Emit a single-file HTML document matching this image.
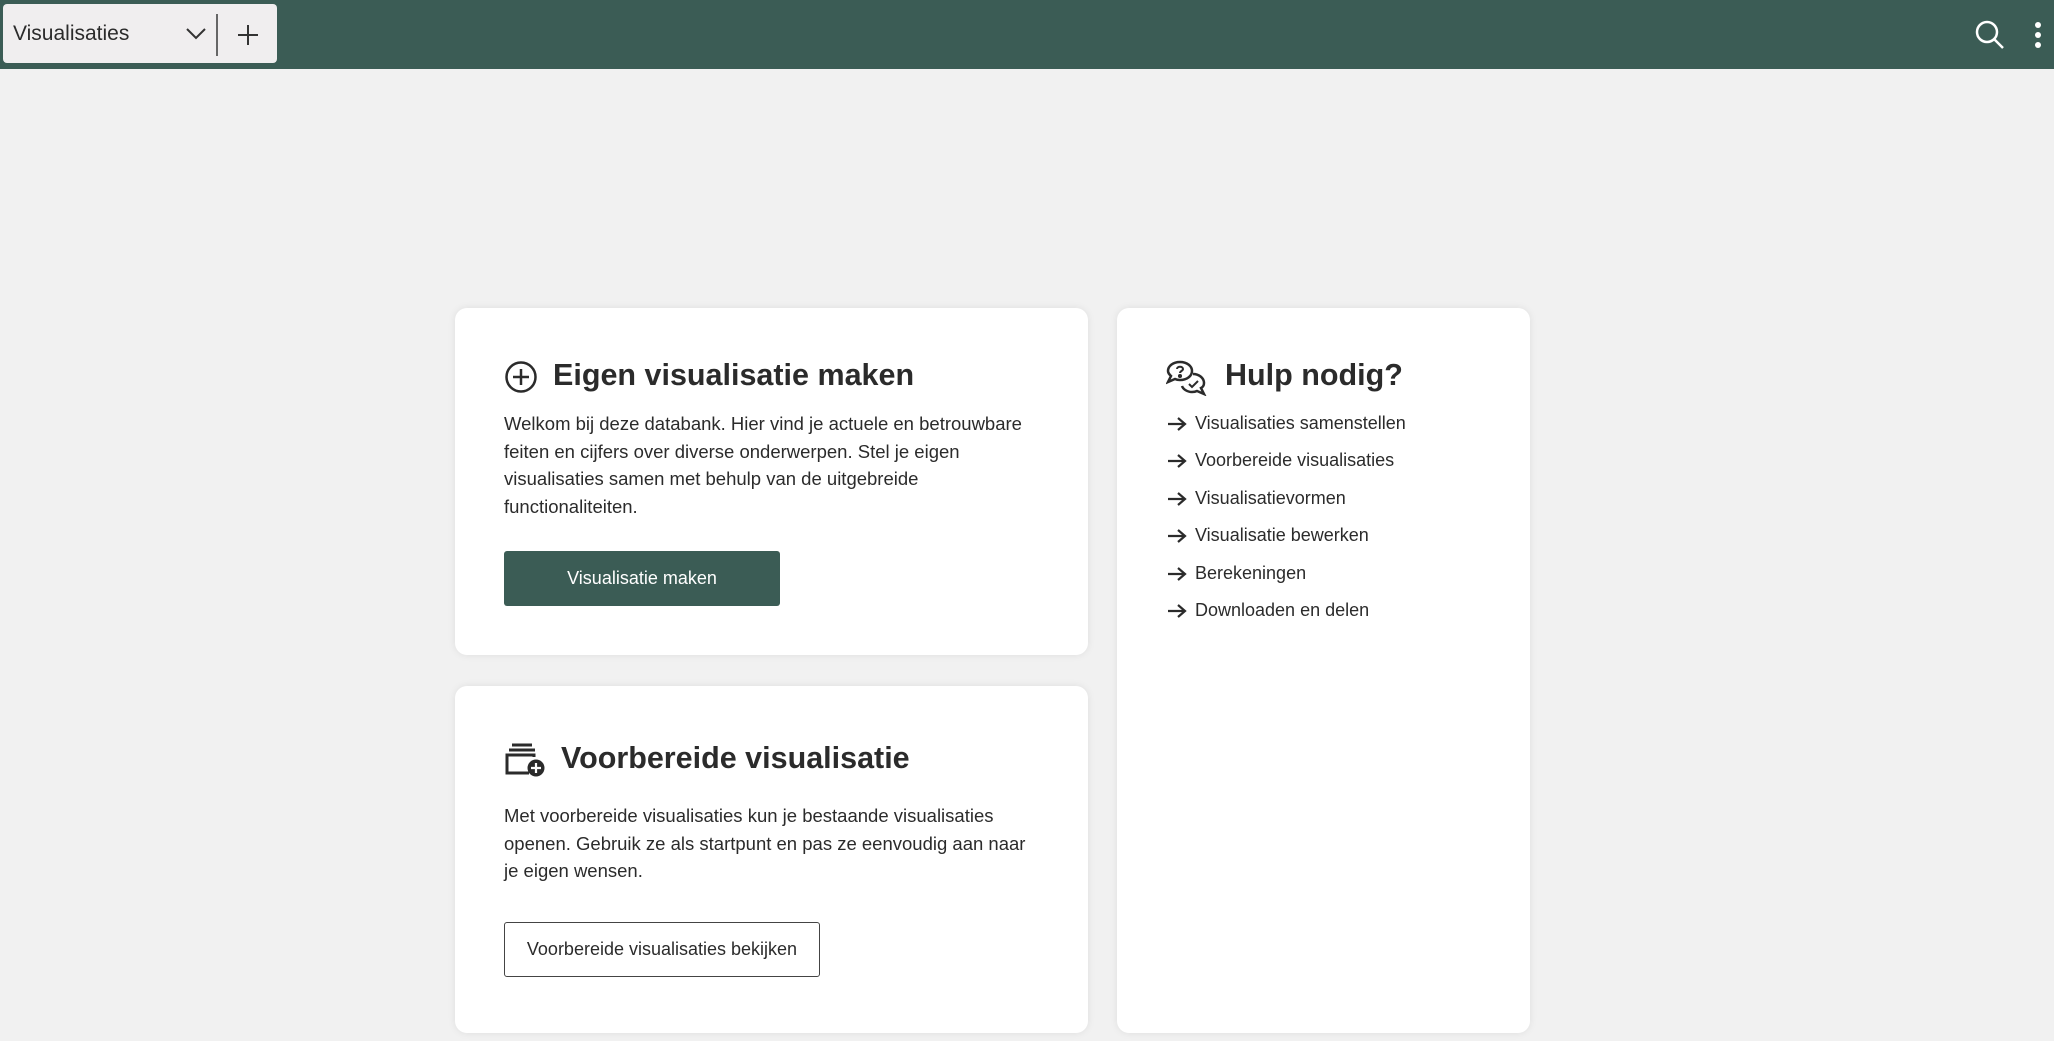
<!DOCTYPE html>
<html><head><meta charset="utf-8"><style>
*{box-sizing:border-box;margin:0;padding:0}
body{width:2054px;height:1041px;background:#f1f1f1;font-family:"Liberation Sans",sans-serif;color:#2b2b2b;position:relative;overflow:hidden}
.top{position:absolute;left:0;top:0;width:2054px;height:69px;background:#3b5c55}
.tab{position:absolute;left:3px;top:4px;width:274px;height:59px;background:#f0eeef;border-radius:4px}
.tab span{position:absolute;left:10px;top:18px;font-size:21px;color:#2b2b2b}
.card{position:absolute;background:#fff;border-radius:12px;box-shadow:0 0 8px rgba(0,0,0,.08)}
h2{position:absolute;font-size:30.5px;font-weight:bold;color:#2b2b2b;white-space:nowrap}
p{position:absolute;font-size:18.5px;line-height:27.5px;color:#2b2b2b;white-space:nowrap}
.btn{position:absolute;font-size:18px;display:flex;align-items:center;justify-content:center;border-radius:3px}
.li{position:absolute;left:78px;font-size:18px;white-space:nowrap}
.li svg{position:absolute;left:-28px;top:3px}
</style></head><body>
<div class="top">
 <div class="tab"><span>Visualisaties</span>
  <svg style="position:absolute;left:182px;top:22px" width="22" height="14"><path d="M2 3l9 9 9-9" fill="none" stroke="#333" stroke-width="2"/></svg>
  <div style="position:absolute;left:213px;top:10px;width:2px;height:42px;background:#666"></div>
  <svg style="position:absolute;left:234px;top:20px" width="22" height="22"><path d="M11 1v20M1 11h20" stroke="#333" stroke-width="2"/></svg>
 </div>
 <svg style="position:absolute;left:1974px;top:19px" width="32" height="32"><circle cx="13" cy="13" r="10" fill="none" stroke="#fff" stroke-width="2.5"/><path d="M20 20l9 9" stroke="#fff" stroke-width="2.5"/></svg>
 <svg style="position:absolute;left:2033px;top:21px" width="10" height="30"><circle cx="5" cy="4" r="3" fill="#fff"/><circle cx="5" cy="14" r="3" fill="#fff"/><circle cx="5" cy="24" r="3" fill="#fff"/></svg>
</div>

<div class="card" style="left:455px;top:308px;width:633px;height:347px">
 <svg style="position:absolute;left:49px;top:52px" width="34" height="34"><circle cx="17" cy="17" r="14.5" fill="none" stroke="#2b2b2b" stroke-width="2.5"/><path d="M17 9v16M9 17h16" stroke="#2b2b2b" stroke-width="2.5"/></svg>
 <h2 style="left:98px;top:50px">Eigen visualisatie maken</h2>
 <p style="left:49px;top:102px">Welkom bij deze databank. Hier vind je actuele en betrouwbare<br>feiten en cijfers over diverse onderwerpen. Stel je eigen<br>visualisaties samen met behulp van de uitgebreide<br>functionaliteiten.</p>
 <div class="btn" style="left:49px;top:243px;width:276px;height:55px;background:#3b5c55;color:#fff">Visualisatie maken</div>
</div>

<div class="card" style="left:455px;top:686px;width:633px;height:347px">
 <svg style="position:absolute;left:49px;top:57px" width="42" height="34"><path d="M8 2h20M5 7h26" stroke="#2b2b2b" stroke-width="3"/><path d="M30 14V12H3v18h22" fill="none" stroke="#2b2b2b" stroke-width="3"/><circle cx="32" cy="25" r="8.5" fill="#2b2b2b"/><path d="M32 20v10M27 25h10" stroke="#fff" stroke-width="2.2"/></svg>
 <h2 style="left:106px;top:55px">Voorbereide visualisatie</h2>
 <p style="left:49px;top:116px">Met voorbereide visualisaties kun je bestaande visualisaties<br>openen. Gebruik ze als startpunt en pas ze eenvoudig aan naar<br>je eigen wensen.</p>
 <div class="btn" style="left:49px;top:236px;width:316px;height:55px;border:1.5px solid #444;color:#2b2b2b">Voorbereide visualisaties bekijken</div>
</div>

<div class="card" style="left:1117px;top:308px;width:413px;height:725px">
 <svg style="position:absolute;left:49px;top:52px" width="44" height="36" fill="none" stroke="#2b2b2b" stroke-width="2.5"><path d="M14 2c7 0 12 4 12 9s-5 9-12 9c-2 0-3 0-5-1l-7 3 3-6c-2-2-3-3-3-5 0-5 5-9 12-9z"/><path d="M27 14c6 0 11 4 11 9 0 2-1 4-3 5l3 6-7-3c-2 1-3 1-5 1-5 0-9-3-10-6"/><path d="M11 9c0-3 6-3 6 0 0 2-3 2-3 4" stroke-width="2"/><circle cx="14" cy="16" r="0.8" fill="#2b2b2b"/><path d="M23 24l3 3 6-6" stroke-width="2"/></svg>
 <h2 style="left:108px;top:50px">Hulp nodig?</h2>
 <div class="li" style="top:105px"><svg width="20" height="16"><path d="M1 8h17M11 2l7 6-7 6" fill="none" stroke="#2b2b2b" stroke-width="2.2"/></svg>Visualisaties samenstellen</div>
 <div class="li" style="top:142px"><svg width="20" height="16"><path d="M1 8h17M11 2l7 6-7 6" fill="none" stroke="#2b2b2b" stroke-width="2.2"/></svg>Voorbereide visualisaties</div>
 <div class="li" style="top:180px"><svg width="20" height="16"><path d="M1 8h17M11 2l7 6-7 6" fill="none" stroke="#2b2b2b" stroke-width="2.2"/></svg>Visualisatievormen</div>
 <div class="li" style="top:217px"><svg width="20" height="16"><path d="M1 8h17M11 2l7 6-7 6" fill="none" stroke="#2b2b2b" stroke-width="2.2"/></svg>Visualisatie bewerken</div>
 <div class="li" style="top:255px"><svg width="20" height="16"><path d="M1 8h17M11 2l7 6-7 6" fill="none" stroke="#2b2b2b" stroke-width="2.2"/></svg>Berekeningen</div>
 <div class="li" style="top:292px"><svg width="20" height="16"><path d="M1 8h17M11 2l7 6-7 6" fill="none" stroke="#2b2b2b" stroke-width="2.2"/></svg>Downloaden en delen</div>
</div>
</body></html>
